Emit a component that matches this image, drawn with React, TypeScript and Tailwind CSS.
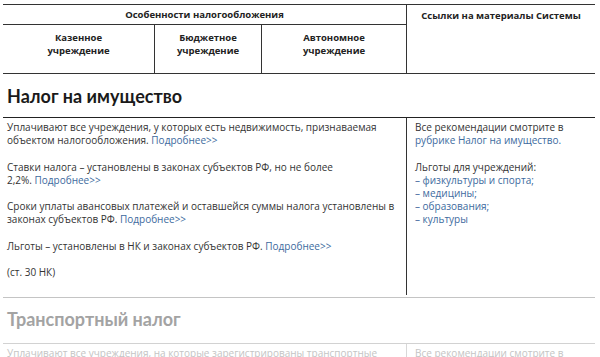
import React from 'react';

const more = 'Подробнее>>';

function Link({ children }: { children: React.ReactNode }) {
  return <span className="text-[#3d6a9e]">{children}</span>;
}

function App() {
  return (
    <div className="w-[600px] h-[357px] overflow-hidden bg-white pt-1 pl-[3px] pr-[5px] text-[#333] font-['Open_Sans',sans-serif]">
      {/* шапка таблицы */}
      <div className="grid grid-cols-[152px_107px_144px_189px] grid-rows-[20px_48px] border-y border-[#333] text-[9.5px] font-bold text-[#222] leading-[13px]">
        <div className="col-span-3 flex items-center justify-center border-b border-[#333]">
          Особенности налогообложения
        </div>
        <div className="row-span-2 border-l border-[#333] pt-[4px] text-center">
          Ссылки на материалы Системы
        </div>
        <div className="border-r border-[#333] pt-[6px] text-center">
          Казенное
          <br />
          учреждение
        </div>
        <div className="border-r border-[#333] pt-[6px] text-center">
          Бюджетное
          <br />
          учреждение
        </div>
        <div className="pt-[6px] text-center">
          Автономное
          <br />
          учреждение
        </div>
      </div>

      {/* Налог на имущество */}
      <div className="flex h-[44px] items-center border-b border-[#222] pl-1 pt-[2px] font-['Lato',sans-serif] text-[18px] font-bold text-[#1a1a1a]">
        Налог на имущество
      </div>
      <div className="grid grid-cols-[403px_189px] border-b border-[#c4c4c4] text-[10px] leading-[13px]">
        <div className="space-y-[13.5px] pt-[3px] pb-[18px] pl-1 pr-2">
          <p>
            Уплачивают все учреждения, у которых есть недвижимость, признаваемая объектом
            налогообложения. <Link>{more}</Link>
          </p>
          <p>
            Ставки налога – установлены в законах субъектов РФ, но не более
            <br />
            2,2%. <Link>{more}</Link>
          </p>
          <p>
            Сроки уплаты авансовых платежей и оставшейся суммы налога установлены в законах
            субъектов РФ. <Link>{more}</Link>
          </p>
          <p>
            Льготы – установлены в НК и законах субъектов РФ. <Link>{more}</Link>
          </p>
          <p>(ст. 30 НК)</p>
        </div>
        <div className="mb-[2px] space-y-[13.5px] border-l border-[#333] pt-[3px] pl-2">
          <p>
            Все рекомендации смотрите в <Link>рубрике Налог на имущество.</Link>
          </p>
          <div>
            <p>Льготы для учреждений:</p>
            <Link>
              <p>– физкультуры и спорта;</p>
              <p>– медицины;</p>
              <p>– образования;</p>
              <p>– культуры</p>
            </Link>
          </div>
        </div>
      </div>

      {/* Транспортный налог */}
      <div className="flex h-[46px] items-center border-b border-[#d2d2d2] pl-1 pb-[2px] font-['Lato',sans-serif] text-[18px] font-bold text-[#a3a3a3]">
        Транспортный налог
      </div>
      <div className="grid grid-cols-[403px_189px] text-[10px] leading-[13px] text-[#c4c4c4]">
        <p className="pt-[3px] pl-1 pr-2">
          Уплачивают все учреждения, на которые зарегистрированы транспортные средства.
        </p>
        <p className="border-l border-[#d8d8d8] pt-[3px] pl-2">Все рекомендации смотрите в</p>
      </div>
    </div>
  );
}

export default App;
